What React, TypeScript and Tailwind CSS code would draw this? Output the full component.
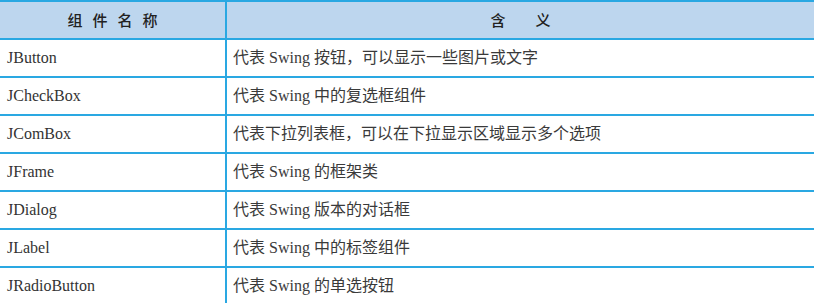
const rows = [
  ["JButton", "代表 Swing 按钮，可以显示一些图片或文字"],
  ["JCheckBox", "代表 Swing 中的复选框组件"],
  ["JComBox", "代表下拉列表框，可以在下拉显示区域显示多个选项"],
  ["JFrame", "代表 Swing 的框架类"],
  ["JDialog", "代表 Swing 版本的对话框"],
  ["JLabel", "代表 Swing 中的标签组件"],
  ["JRadioButton", "代表 Swing 的单选按钮"],
];

export default function App() {
  return (
    <div className="w-[816px] h-[303px] overflow-hidden bg-white">
      <div className="w-[814px] border-t-2 border-[#2aa8e2] text-[#333] font-['Liberation_Serif','Noto_Sans_CJK_SC',serif]">
        {/* header */}
        <div className="flex h-[38px] bg-[#bdd6ee] border-b-2 border-[#2aa8e2] text-[15px] font-medium text-[#222] font-['Noto_Sans_CJK_SC',sans-serif]">
          <div className="w-[227px] shrink-0 border-r-2 border-[#2aa8e2] flex items-center justify-center">
            <span className="tracking-[10px] pl-[10px]">组件名称</span>
          </div>
          <div className="flex-1 flex items-center justify-center">
            <span className="tracking-[30px] pl-[30px]">含义</span>
          </div>
        </div>

        {rows.map(([name, desc]) => (
          <div key={name} className="flex h-[38px] border-b-2 border-[#2aa8e2] text-[16px]">
            <div className="w-[227px] shrink-0 border-r-2 border-[#2aa8e2] flex items-center pl-[7px]">
              {name}
            </div>
            <div className="flex-1 flex items-center pl-[6px] text-[#3a3a3a]">{desc}</div>
          </div>
        ))}
      </div>
    </div>
  );
}
